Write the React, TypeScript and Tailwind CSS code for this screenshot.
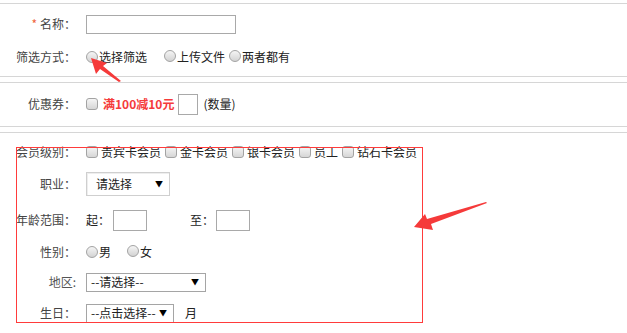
import React from 'react';

const Check = () => (
  <span className="inline-block w-[12px] h-[12px] rounded-[3px] border border-[#a3a3a3] bg-gradient-to-b from-[#f5f5f5] to-[#d6d6d6] shrink-0" />
);

const Radio = () => (
  <span className="inline-block w-[12px] h-[12px] rounded-full border border-[#a3a3a3] bg-gradient-to-b from-[#f5f5f5] to-[#d3d3d3] shrink-0" />
);

const Label = ({ children }: { children: React.ReactNode }) => (
  <div className="w-[76px] shrink-0 text-right text-[#444] pr-0">{children}</div>
);

const Row = ({ label, children, className = '' }: { label: React.ReactNode; children: React.ReactNode; className?: string }) => (
  <div className={`flex items-center h-[24px] ${className}`}>
    <Label>{label}</Label>
    <div className="ml-[10px] flex items-center text-[#222]">{children}</div>
  </div>
);

const Select = ({ text, w, h, pl, big }: { text: string; w: string; h: string; pl: string; big?: boolean }) => (
  <div className={`flex items-center justify-between border ${big ? 'border-[#cfcfcf] shadow-[inset_1px_1px_0_#eee]' : 'border-[#a5a5a5]'} bg-white ${w} ${h} ${pl} pr-[6px]`}>
    <span>{text}</span>
    <span className="text-[8px] leading-none text-black">▼</span>
  </div>
);

export default function App() {
  const levels = ['贵宾卡会员', '金卡会员', '银卡会员', '员工', '钻石卡会员'];
  return (
    <div
      className="relative w-[627px] h-[333px] bg-white text-[12px] overflow-hidden"
      style={{ fontFamily: '"Noto Sans CJK SC", "Liberation Sans", sans-serif' }}
    >
      <div className="mt-[3px] border-t border-[#d6d6d6] pt-[8px] pb-[7px] border-b flex flex-col gap-[9px]">
        <Row label={<><span className="text-[#f0643c] mr-[3px]">*</span>名称：</>}>
          <div className="w-[150px] h-[19px] border border-[#a9a9a9]" />
        </Row>
        <Row label="筛选方式：">
          <Radio />
          <span className="ml-[1px]">选择筛选</span>
          <span className="ml-[17px]"><Radio /></span>
          <span className="ml-[1px]">上传文件</span>
          <span className="ml-[4px]"><Radio /></span>
          <span className="ml-[1px]">两者都有</span>
        </Row>
      </div>

      <div className="mt-[5px] border-t border-b border-[#d6d6d6] pt-[9px] pb-[10px]">
        <Row label="优惠券：">
          <Check />
          <span className="ml-[5px] font-bold text-[#f53b3b]">满100减10元</span>
          <div className="ml-[4px] w-[20px] h-[21px] border border-[#a9a9a9]" />
          <span className="ml-[5px]">(数量)</span>
        </Row>
      </div>

      <div className="mt-[5px] border-t border-[#d6d6d6] pt-[7px] flex flex-col">
        <Row label="会员级别：">
          {levels.map((l, i) => (
            <span key={l} className={`flex items-center ${i > 0 ? 'ml-[4px]' : ''}`}>
              <Check />
              <span className="ml-[3px]">{l}</span>
            </span>
          ))}
        </Row>
        <Row label="职业：" className="mt-[8px]">
          <Select text="请选择" w="w-[84px]" h="h-[24px]" pl="pl-[9px]" big />
        </Row>
        <Row label="年龄范围：" className="mt-[12px]">
          <span>起：</span>
          <div className="ml-[3px] w-[34px] h-[21px] border border-[#a9a9a9]" />
          <span className="ml-[43px]">至：</span>
          <div className="ml-[2px] w-[34px] h-[21px] border border-[#a9a9a9]" />
        </Row>
        <Row label="性别：" className="mt-[8px]">
          <Radio />
          <span className="ml-[1px]">男</span>
          <span className="ml-[16px]"><Radio /></span>
          <span className="ml-[1px]">女</span>
        </Row>
        <Row label={<span className="text-[#555]">地区:</span>} className="mt-[6px]">
          <Select text="--请选择--" w="w-[120px]" h="h-[19px]" pl="pl-[4px]" />
        </Row>
        <Row label="生日：" className="mt-[7px]">
          <Select text="--点击选择--" w="w-[88px]" h="h-[19px]" pl="pl-[4px]" />
          <span className="ml-[11px]">月</span>
        </Row>
      </div>

      <div className="absolute left-[16px] top-[147px] w-[407px] h-[176px] border border-[#ff3b3b] pointer-events-none" />

      <svg className="absolute left-0 top-0 pointer-events-none" width="627" height="333">
        <polygon points="91,58 107,63 103,66 121,81 119,82 100,69 96,74" fill="#f53a3a" />
        <polygon points="414,227 425,214 427,219 486,202 487,203 431,224 433,230" fill="#f53a3a" />
      </svg>
    </div>
  );
}
